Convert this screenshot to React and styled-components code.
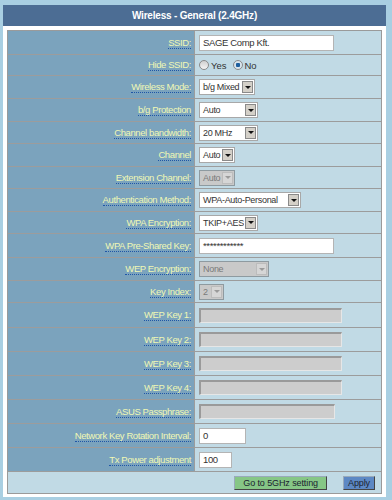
import React from "react";
import styled, { createGlobalStyle } from "styled-components";

const GlobalStyle = createGlobalStyle`
  html, body {
    margin: 0;
    padding: 0;
    background: #a9cfe2;
    font-family: "Liberation Sans", Arial, sans-serif;
  }
`;

const Page = styled.div`
  width: 392px;
  height: 500px;
  padding: 5px 0 0 3px;
  box-sizing: border-box;
`;

const Panel = styled.div`
  width: 383px;
  background: #ffffff;
`;

const Header = styled.div`
  height: 21px;
  background: #4c6d94;
  color: #ffffff;
  font-weight: bold;
  font-size: 10px;
  letter-spacing: -0.2px;
  display: flex;
  align-items: center;
  justify-content: center;
`;

const Body = styled.div`
  padding: 4px 4px 3px 4px;
`;

const Table = styled.div`
  border: 1px solid #9a9a9a;
`;

const Row = styled.div`
  display: grid;
  grid-template-columns: 187px 1fr;
  height: ${(p) => p.h}px;
  border-bottom: 1px solid #9c9c9c;
`;

const LabelCell = styled.div`
  background: #7ba3bd;
  border-right: 1px solid #9c9c9c;
  display: flex;
  align-items: center;
  justify-content: flex-end;
  padding-right: 3px;
`;

const Label = styled.span`
  color: #f0f8b4;
  font-size: 9.5px;
  letter-spacing: -0.4px;
  line-height: 11px;
  border-bottom: 1px dotted #1f56a8;
`;

const ValueCell = styled.div`
  background: #c1dae5;
  display: flex;
  align-items: center;
  padding-left: 4px;
  gap: 6px;
`;

const TextInput = styled.div`
  box-sizing: border-box;
  width: ${(p) => p.w}px;
  height: ${(p) => p.h || 16}px;
  background: ${(p) => (p.disabled ? "#cdcdcd" : "#ffffff")};
  border-style: solid;
  border-color: ${(p) =>
    p.disabled ? "#9a9a9a #e6e6e6 #e6e6e6 #9a9a9a" : "#b4b4b4"};
  border-width: ${(p) => (p.disabled ? "2px 1px 1px 2px" : "1px")};
  font-size: 9.5px;
  letter-spacing: -0.35px;
  color: #333;
  padding-left: 3px;
  display: flex;
  align-items: center;
`;

const Select = styled.div`
  box-sizing: border-box;
  width: ${(p) => p.w}px;
  height: 16px;
  display: flex;
  align-items: stretch;
  background: ${(p) => (p.disabled ? "#c9c9c9" : "#ffffff")};
  border: 1px solid ${(p) => (p.disabled ? "#8e9aa0" : "#a8a8a8")};
  font-size: 9px;
  letter-spacing: -0.3px;
  color: ${(p) => (p.disabled ? "#7a7a7a" : "#333")};
`;

const SelectText = styled.span`
  flex: 1;
  padding-left: 3px;
  display: flex;
  align-items: center;
  white-space: nowrap;
  overflow: hidden;
`;

const Arrow = styled.span`
  width: 11px;
  margin: 1px;
  box-sizing: border-box;
  background: ${(p) => (p.disabled ? "#d6d6d6" : "#d4d0c8")};
  border: 1px solid ${(p) => (p.disabled ? "#bcbcbc" : "#8a8a8a")};
  display: flex;
  align-items: center;
  justify-content: center;
  &::after {
    content: "";
    border-left: 3px solid transparent;
    border-right: 3px solid transparent;
    border-top: 3px solid ${(p) => (p.disabled ? "#9a9a9a" : "#111")};
  }
`;

const RadioGroup = styled.label`
  display: flex;
  align-items: center;
  gap: 2px;
  font-size: 9.5px;
  color: #333;
`;

const RadioDot = styled.span`
  width: 10px;
  height: 10px;
  border-radius: 50%;
  box-sizing: border-box;
  border: 1px solid #8a8a8a;
  background: ${(p) =>
    p.checked
      ? "radial-gradient(circle, #1d5f9e 0 2px, #d8e4ec 2.5px)"
      : "linear-gradient(#d0d0d0, #f4f4f4)"};
`;

const ButtonRow = styled.div`
  background: #c1dae5;
  height: 21px;
  display: flex;
  align-items: center;
  justify-content: flex-end;
  padding-right: 6px;
  gap: 16px;
`;

const Button = styled.button`
  height: 14px;
  padding: 0 ${(p) => (p.green ? 8 : 4)}px;
  font-family: "Liberation Sans", Arial, sans-serif;
  font-size: 9px;
  letter-spacing: -0.1px;
  line-height: 10px;
  color: #1b2330;
  background: ${(p) => (p.green ? "#86c686" : "#5d88c4")};
  border: 1px solid;
  border-color: #9ab #444 #444 #9ab;
  display: flex;
  align-items: center;
  cursor: pointer;
`;

const Dropdown = ({ w, value, disabled }) => (
  <Select w={w} disabled={disabled}>
    <SelectText>{value}</SelectText>
    <Arrow disabled={disabled} />
  </Select>
);

const Field = ({ label, h, children }) => (
  <Row h={h}>
    <LabelCell>
      <Label>{label}</Label>
    </LabelCell>
    <ValueCell>{children}</ValueCell>
  </Row>
);

export default function App() {
  return (
    <Page>
      <GlobalStyle />
      <Panel>
        <Header>Wireless - General (2.4GHz)</Header>
        <Body>
          <Table>
            <Field label="SSID:" h={23}>
              <TextInput w={135}>SAGE Comp Kft.</TextInput>
            </Field>
            <Field label="Hide SSID:" h={20}>
              <RadioGroup>
                <RadioDot />
                Yes
              </RadioGroup>
              <RadioGroup>
                <RadioDot checked />
                No
              </RadioGroup>
            </Field>
            <Field label="Wireless Mode:" h={22}>
              <Dropdown w={56} value="b/g Mixed" />
            </Field>
            <Field label="b/g Protection" h={22}>
              <Dropdown w={59} value="Auto" />
            </Field>
            <Field label="Channel bandwidth:" h={21}>
              <Dropdown w={59} value="20 MHz" />
            </Field>
            <Field label="Channel" h={22}>
              <Dropdown w={36} value="Auto" />
            </Field>
            <Field label="Extension Channel:" h={21}>
              <Dropdown w={36} value="Auto" disabled />
            </Field>
            <Field label="Authentication Method:" h={22}>
              <Dropdown w={102} value="WPA-Auto-Personal" />
            </Field>
            <Field label="WPA Encryption:" h={21}>
              <Dropdown w={59} value="TKIP+AES" />
            </Field>
            <Field label="WPA Pre-Shared Key:" h={23}>
              <TextInput w={135}>************</TextInput>
            </Field>
            <Field label="WEP Encryption:" h={22}>
              <Dropdown w={70} value="None" disabled />
            </Field>
            <Field label="Key Index:" h={21}>
              <Dropdown w={25} value="2" disabled />
            </Field>
            <Field label="WEP Key 1:" h={24}>
              <TextInput w={143} h={15} disabled />
            </Field>
            <Field label="WEP Key 2:" h={23}>
              <TextInput w={143} h={15} disabled />
            </Field>
            <Field label="WEP Key 3:" h={23}>
              <TextInput w={143} h={15} disabled />
            </Field>
            <Field label="WEP Key 4:" h={23}>
              <TextInput w={143} h={15} disabled />
            </Field>
            <Field label="ASUS Passphrase:" h={23}>
              <TextInput w={136} h={15} disabled />
            </Field>
            <Field label="Network Key Rotation Interval:" h={23}>
              <TextInput w={47}>0</TextInput>
            </Field>
            <Field label="Tx Power adjustment" h={23}>
              <TextInput w={33}>100</TextInput>
            </Field>
            <ButtonRow>
              <Button green>Go to 5GHz setting</Button>
              <Button>Apply</Button>
            </ButtonRow>
          </Table>
        </Body>
      </Panel>
    </Page>
  );
}
